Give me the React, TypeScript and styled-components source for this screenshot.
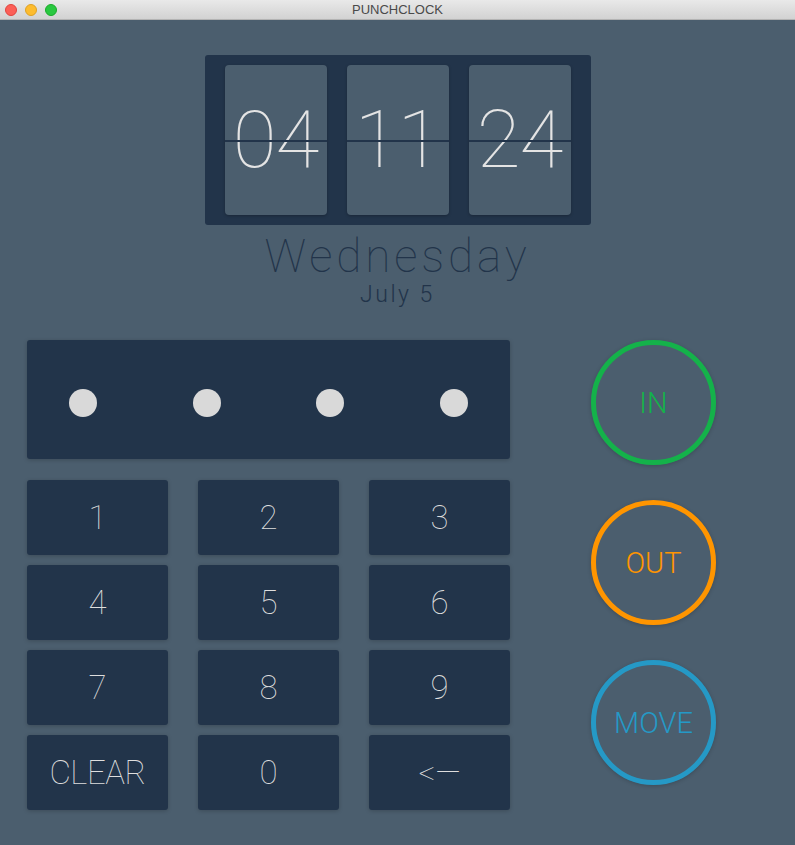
import styled, { createGlobalStyle } from 'styled-components';

const GlobalStyle = createGlobalStyle`
  html, body {
    margin: 0;
    padding: 0;
    background: #4b5e6e;
  }
  * {
    box-sizing: border-box;
  }
`;

const Window = styled.div`
  width: 795px;
  height: 845px;
  background: #4b5e6e;
  font-family: Roboto, "Liberation Sans", sans-serif;
  overflow: hidden;
`;

const TitleBar = styled.div`
  height: 20px;
  display: flex;
  align-items: center;
  position: relative;
  background: linear-gradient(#e9e9e9, #d2d2d2);
  border-bottom: 1px solid #b3b3b3;
  padding-left: 5px;
  gap: 8px;
`;

const Light = styled.span<{ color: string; edge: string }>`
  width: 12px;
  height: 12px;
  border-radius: 50%;
  background: ${p => p.color};
  border: 0.5px solid ${p => p.edge};
`;

const Title = styled.div`
  position: absolute;
  left: 0;
  right: 0;
  top: 0;
  line-height: 20px;
  text-align: center;
  font-family: "Liberation Sans", Arial, sans-serif;
  font-size: 13px;
  color: #4a4a4a;
`;

const Header = styled.div`
  display: flex;
  flex-direction: column;
  align-items: center;
  padding-top: 35px;
`;

const ClockFrame = styled.div`
  display: flex;
  gap: 20px;
  padding: 10px 20px;
  background: #22344a;
  border-radius: 3px;
`;

const FlipCard = styled.div`
  position: relative;
  width: 102px;
  height: 150px;
  background: #4b5e6e;
  border-radius: 4px;
  display: flex;
  align-items: center;
  justify-content: center;
  font-size: 80px;
  font-weight: 100;
  color: #e4e4e4;
  letter-spacing: -1px;
  box-shadow: 0 1px 3px rgba(0, 0, 0, 0.25);

  &::after {
    content: '';
    position: absolute;
    left: 0;
    right: 0;
    top: 75px;
    height: 2px;
    background: #22344a;
  }
`;

const DayName = styled.div`
  margin-top: 8px;
  font-size: 46px;
  font-weight: 100;
  letter-spacing: 3.8px;
  line-height: 46px;
  color: #22344a;
`;

const DateLine = styled.div`
  margin-top: 5px;
  font-size: 23px;
  font-weight: 300;
  letter-spacing: 2.5px;
  line-height: 22px;
  color: #22344a;
`;

const Main = styled.div`
  display: flex;
  padding-left: 27px;
  margin-top: 34px;
`;

const PadColumn = styled.div`
  width: 483px;
  display: flex;
  flex-direction: column;
  gap: 21px;
`;

const PinDisplay = styled.div`
  height: 119px;
  background: #22344a;
  border-radius: 3px;
  display: flex;
  align-items: center;
  justify-content: space-between;
  padding: 7px 42px 0;
  box-shadow: 0 1px 4px rgba(0, 0, 0, 0.2);
`;

const Dot = styled.span`
  width: 28px;
  height: 28px;
  border-radius: 50%;
  background: #d9d9d9;
`;

const Keys = styled.div`
  display: grid;
  grid-template-columns: repeat(3, 141px);
  grid-auto-rows: 75px;
  column-gap: 30px;
  row-gap: 10px;
`;

const Key = styled.div<{ small?: boolean }>`
  background: #22344a;
  border-radius: 3px;
  display: flex;
  align-items: center;
  justify-content: center;
  font-size: 33px;
  font-weight: 100;
  color: #dedede;
  letter-spacing: ${p => (p.small ? '-0.5px' : '0')};
  box-shadow: 0 1px 4px rgba(0, 0, 0, 0.2);
`;

const ActionColumn = styled.div`
  margin-left: 81px;
  display: flex;
  flex-direction: column;
  gap: 35px;
`;

const Ring = styled.div<{ tone: string }>`
  width: 125px;
  height: 125px;
  border-radius: 50%;
  border: 5px solid ${p => p.tone};
  color: ${p => p.tone};
  display: flex;
  align-items: center;
  justify-content: center;
  font-size: 29px;
  font-weight: 300;
  box-shadow: 0 1px 4px rgba(0, 0, 0, 0.2);
`;

const keys = ['1', '2', '3', '4', '5', '6', '7', '8', '9', 'CLEAR', '0', '<—'];

const actions = [
  { label: 'IN', tone: '#14b24a' },
  { label: 'OUT', tone: '#ff9500' },
  { label: 'MOVE', tone: '#2599c6' },
];

export default function App() {
  return (
    <Window>
      <GlobalStyle />
      <TitleBar>
        <Light color="#fc5f57" edge="#e0443e" />
        <Light color="#fdbc2e" edge="#dea123" />
        <Light color="#29c840" edge="#1aab29" />
        <Title>PUNCHCLOCK</Title>
      </TitleBar>

      <Header>
        <ClockFrame>
          <FlipCard>04</FlipCard>
          <FlipCard>11</FlipCard>
          <FlipCard>24</FlipCard>
        </ClockFrame>
        <DayName>Wednesday</DayName>
        <DateLine>July 5</DateLine>
      </Header>

      <Main>
        <PadColumn>
          <PinDisplay>
            <Dot />
            <Dot />
            <Dot />
            <Dot />
          </PinDisplay>
          <Keys>
            {keys.map(k => (
              <Key key={k} small={k === 'CLEAR'}>
                {k}
              </Key>
            ))}
          </Keys>
        </PadColumn>
        <ActionColumn>
          {actions.map(a => (
            <Ring key={a.label} tone={a.tone}>
              {a.label}
            </Ring>
          ))}
        </ActionColumn>
      </Main>
    </Window>
  );
}
